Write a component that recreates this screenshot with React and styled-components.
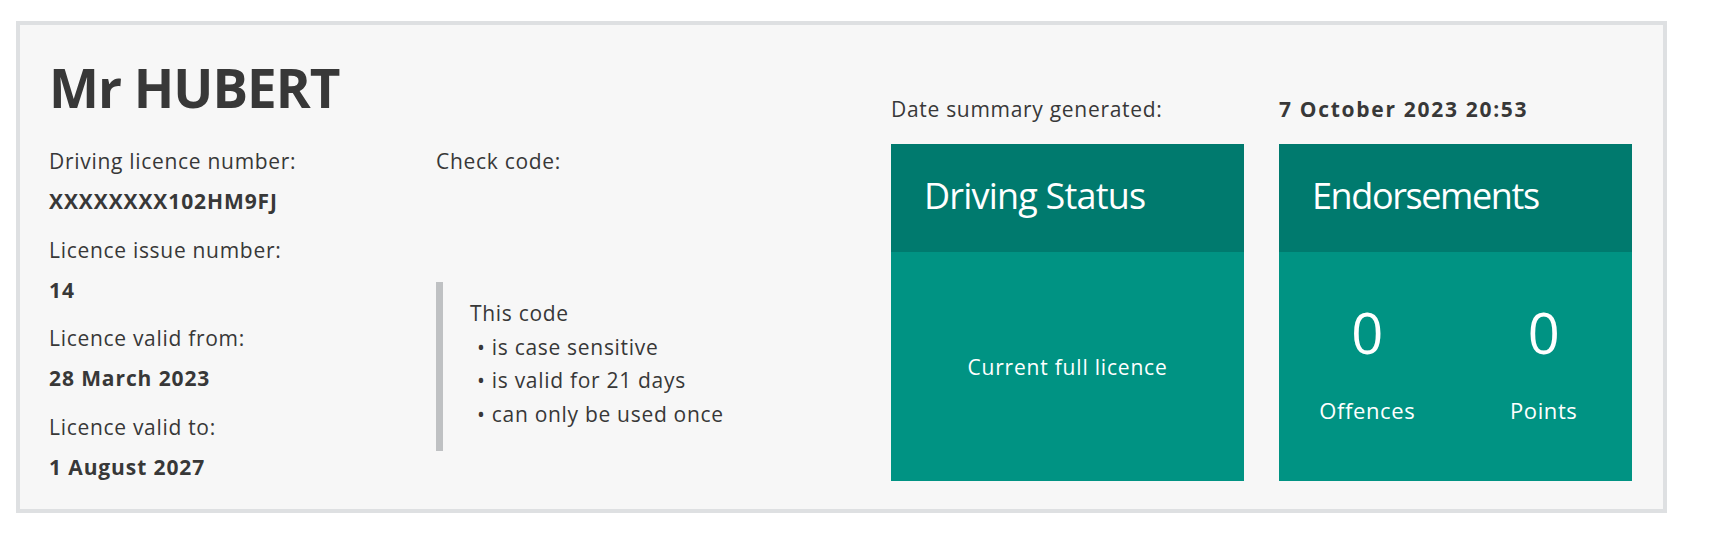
import React from "react";
import styled, { createGlobalStyle } from "styled-components";

const GlobalStyle = createGlobalStyle`
  html, body {
    margin: 0;
    padding: 0;
    background: #ffffff;
  }
  body {
    font-family: "Open Sans", "Noto Sans", Arial, sans-serif;
    color: #383838;
  }
  * {
    box-sizing: border-box;
  }
`;

const Panel = styled.section`
  margin: 21px 0 0 16px;
  width: 1651px;
  height: 492px;
  background: #f7f7f7;
  border: 4px solid #dee0e2;
  display: flex;
  padding: 0 30px 0 29px;
`;

const Summary = styled.div`
  width: 842px;
  padding-top: 36px;
`;

const Name = styled.h1`
  margin: 0 0 35px;
  font-size: 53px;
  line-height: 53px;
  font-weight: 700;
  letter-spacing: -1px;
`;

const Columns = styled.div`
  display: grid;
  grid-template-columns: 387px 1fr;
`;

const Label = styled.div`
  font-size: 21px;
  line-height: 25px;
  letter-spacing: 0.7px;
  margin-bottom: 15px;
`;

const Value = styled.div`
  font-size: 21px;
  line-height: 25px;
  font-weight: 700;
  letter-spacing: 0.9px;
  margin-bottom: 23.5px;
  &:last-child {
    margin-bottom: 0;
  }
`;

const Inset = styled.div`
  margin-top: 108px;
  width: 360px;
  border-left: 7px solid #bfc1c3;
  padding: 15px 0 20px 27px;
`;

const InsetLine = styled.div`
  font-size: 21px;
  line-height: 33.5px;
  letter-spacing: 0.7px;
  padding-left: ${(p) => (p.$bullet ? "7px" : "0")};
`;

const Status = styled.div`
  width: 741px;
  padding-top: 72px;
`;

const Pair = styled.div`
  display: grid;
  grid-template-columns: 353px 353px;
  column-gap: 35px;
`;

const DateRow = styled(Pair)`
  margin-bottom: 22px;
  font-size: 21px;
  line-height: 25px;
  letter-spacing: 0.7px;
`;

const DateValue = styled.div`
  font-weight: 700;
  letter-spacing: 1.7px;
`;

const Card = styled.div`
  height: 337px;
  background: #009383;
  color: #ffffff;
  display: flex;
  flex-direction: column;
`;

const CardHeader = styled.div`
  height: 108px;
  background: #007a6e;
  display: flex;
  align-items: center;
  padding: 0 0 4px 33px;
  font-size: 36px;
  line-height: 44px;
  letter-spacing: ${(p) => p.$spacing || "-0.8px"};
`;

const CardBody = styled.div`
  flex: 1;
  display: flex;
  align-items: center;
  justify-content: center;
  font-size: 21px;
  line-height: 28px;
  letter-spacing: 0.8px;
  padding-bottom: ${(p) => (p.$tight ? "6px" : "0")};
`;

const Counts = styled.div`
  width: 100%;
  display: grid;
  grid-template-columns: 1fr 1fr;
`;

const Count = styled.div`
  display: flex;
  flex-direction: column;
  align-items: center;
`;

const Number = styled.div`
  font-size: 56px;
  line-height: 56px;
  letter-spacing: 0;
  margin-bottom: 36px;
`;

const CountLabel = styled.div`
  font-size: 22px;
  line-height: 28px;
  letter-spacing: 0.6px;
`;

const details = [
  ["Driving licence number:", "XXXXXXXX102HM9FJ"],
  ["Licence issue number:", "14"],
  ["Licence valid from:", "28 March 2023"],
  ["Licence valid to:", "1 August 2027"],
];

const rules = ["is case sensitive", "is valid for 21 days", "can only be used once"];

export default function App() {
  return (
    <>
      <GlobalStyle />
      <Panel>
        <Summary>
          <Name>Mr HUBERT</Name>
          <Columns>
            <div>
              {details.map(([label, value]) => (
                <React.Fragment key={label}>
                  <Label>{label}</Label>
                  <Value>{value}</Value>
                </React.Fragment>
              ))}
            </div>
            <div>
              <Label>Check code:</Label>
              <Inset>
                <InsetLine>This code</InsetLine>
                {rules.map((r) => (
                  <InsetLine key={r} $bullet>
                    • {r}
                  </InsetLine>
                ))}
              </Inset>
            </div>
          </Columns>
        </Summary>
        <Status>
          <DateRow>
            <div>Date summary generated:</div>
            <DateValue>7 October 2023 20:53</DateValue>
          </DateRow>
          <Pair>
            <Card>
              <CardHeader>Driving Status</CardHeader>
              <CardBody>Current full licence</CardBody>
            </Card>
            <Card>
              <CardHeader $spacing="-1.4px">Endorsements</CardHeader>
              <CardBody $tight>
                <Counts>
                  <Count>
                    <Number>0</Number>
                    <CountLabel>Offences</CountLabel>
                  </Count>
                  <Count>
                    <Number>0</Number>
                    <CountLabel>Points</CountLabel>
                  </Count>
                </Counts>
              </CardBody>
            </Card>
          </Pair>
        </Status>
      </Panel>
    </>
  );
}
